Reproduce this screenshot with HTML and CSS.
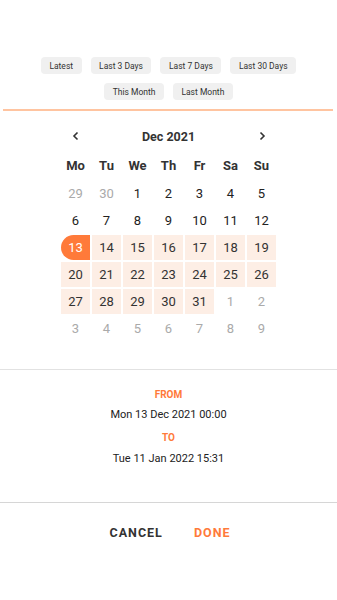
FILE: index.html
```html
<!DOCTYPE html>
<html>
<head>
<meta charset="utf-8">
<link rel="stylesheet" href="styles.css">
</head>
<body>
<div class="page">
  <div class="chips">
    <span class="chip">Latest</span>
    <span class="chip">Last 3 Days</span>
    <span class="chip">Last 7 Days</span>
    <span class="chip">Last 30 Days</span>
    <span class="chip">This Month</span>
    <span class="chip">Last Month</span>
  </div>
  <div class="accent-line"></div>
  <div class="calendar">
    <div class="cal-head">
      <span class="nav"><svg width="10" height="10" viewBox="0 0 10 10"><path d="M6.5 1.5 L3 5 L6.5 8.5" fill="none" stroke="#333" stroke-width="1.6"/></svg></span>
      <span class="month">Dec 2021</span>
      <span class="nav"><svg width="10" height="10" viewBox="0 0 10 10"><path d="M3.5 1.5 L7 5 L3.5 8.5" fill="none" stroke="#333" stroke-width="1.6"/></svg></span>
    </div>
    <div class="dow">
      <span>Mo</span><span>Tu</span><span>We</span><span>Th</span><span>Fr</span><span>Sa</span><span>Su</span>
    </div>
    <div class="days">
      <span class="d other">29</span><span class="d other">30</span><span class="d">1</span><span class="d">2</span><span class="d">3</span><span class="d">4</span><span class="d">5</span>
      <span class="d">6</span><span class="d">7</span><span class="d">8</span><span class="d">9</span><span class="d">10</span><span class="d">11</span><span class="d">12</span>
      <span class="d start">13</span><span class="d range">14</span><span class="d range">15</span><span class="d range">16</span><span class="d range">17</span><span class="d range">18</span><span class="d range">19</span>
      <span class="d range">20</span><span class="d range">21</span><span class="d range">22</span><span class="d range">23</span><span class="d range">24</span><span class="d range">25</span><span class="d range">26</span>
      <span class="d range">27</span><span class="d range">28</span><span class="d range">29</span><span class="d range">30</span><span class="d range">31</span><span class="d other">1</span><span class="d other">2</span>
      <span class="d other">3</span><span class="d other">4</span><span class="d other">5</span><span class="d other">6</span><span class="d other">7</span><span class="d other">8</span><span class="d other">9</span>
    </div>
  </div>
  <div class="summary">
    <div class="label">FROM</div>
    <div class="value">Mon 13 Dec 2021 00:00</div>
    <div class="label to">TO</div>
    <div class="value">Tue 11 Jan 2022 15:31</div>
  </div>
  <div class="actions">
    <span class="btn cancel">CANCEL</span>
    <span class="btn done">DONE</span>
  </div>
</div>
</body>
</html>
```
FILE: styles.css
```css
html, body {
  margin: 0;
  padding: 0;
  background: #ffffff;
}
body {
  font-family: Roboto, "Liberation Sans", sans-serif;
  color: #222;
}
.page {
  width: 337px;
  padding-top: 57px;
}
.chips {
  display: flex;
  flex-wrap: wrap;
  justify-content: center;
  gap: 9px 9px;
  padding: 0 38px;
}
.chip {
  display: inline-flex;
  align-items: center;
  justify-content: center;
  height: 17px;
  padding: 0 8.5px;
  background: #f0f0f0;
  border-radius: 4px;
  font-size: 8.5px;
  color: #333;
}
.accent-line {
  height: 1.5px;
  background: #ffc4a0;
  margin: 9px 4px 0 3px;
}
.calendar {
  width: 215px;
  margin: 12px auto 0;
}
.cal-head {
  display: flex;
  align-items: center;
  justify-content: space-between;
  height: 27px;
}
.nav {
  width: 29px;
  display: flex;
  justify-content: center;
  align-items: center;
}
.month {
  font-weight: 700;
  font-size: 12.5px;
  color: #333;
}
.dow {
  display: grid;
  grid-template-columns: repeat(7, 1fr);
  column-gap: 2px;
  height: 27px;
  margin-top: 2px;
  align-items: center;
}
.dow span {
  text-align: center;
  font-weight: 700;
  font-size: 13px;
  color: #333;
}
.days {
  display: grid;
  grid-template-columns: repeat(7, 1fr);
  grid-auto-rows: 25px;
  gap: 2px;
  margin-top: 2px;
}
.d {
  display: flex;
  align-items: center;
  justify-content: center;
  font-size: 13px;
  color: #222;
}
.d.other {
  color: #aaa;
}
.d.range {
  background: #fdeee5;
  color: #333;
}
.d.start {
  background: #ff7a3a;
  color: #fff;
  border-radius: 13px 0 0 13px;
}
.summary {
  margin-top: 28px;
  border-top: 1.5px solid #e2e2e2;
  padding-top: 18px;
  padding-bottom: 36px;
  text-align: center;
}
.label {
  font-size: 10px;
  font-weight: 700;
  color: #ff7a3a;
  height: 14px;
  line-height: 14px;
}
.label.to {
  margin-top: 9px;
}
.value {
  font-size: 11px;
  color: #222;
  margin-top: 6.5px;
  line-height: 14px;
}
.actions {
  border-top: 1.5px solid #d6d6d6;
  display: flex;
  justify-content: center;
  gap: 31px;
  padding-top: 22px;
  padding-left: 3px;
}
.btn {
  font-size: 12.5px;
  font-weight: 700;
  letter-spacing: 1px;
  line-height: 16px;
}
.cancel {
  color: #333;
}
.done {
  color: #ff7a3a;
}
```
